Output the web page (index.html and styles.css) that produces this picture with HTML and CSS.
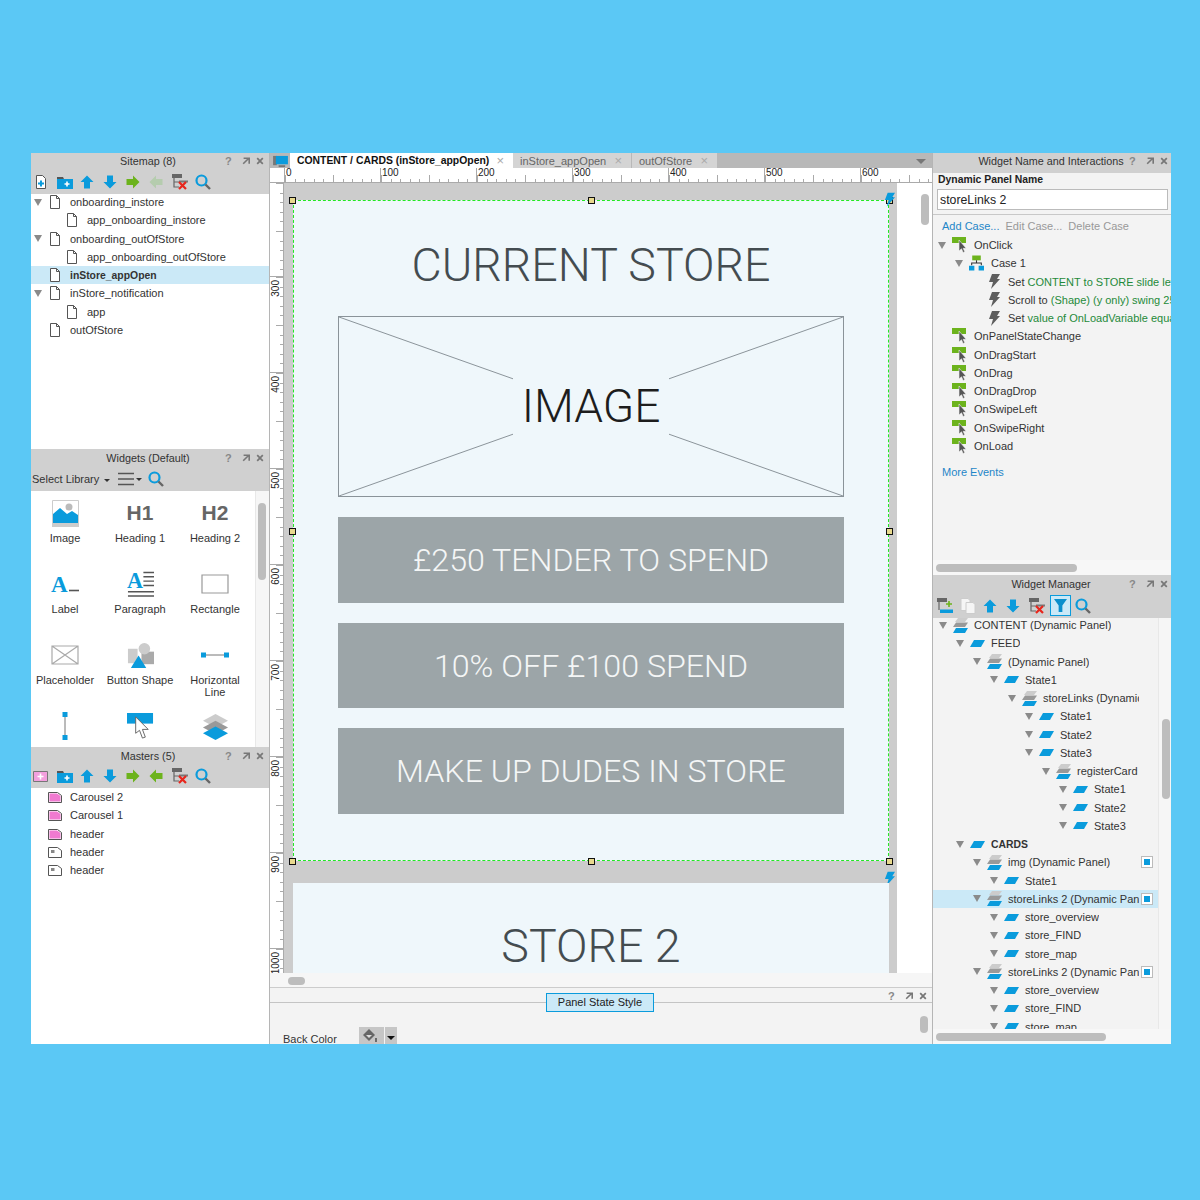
FILE: index.html
```html
<!DOCTYPE html>
<html lang="en">
<head>
  <meta charset="UTF-8" />
  <title>CONTENT / CARDS (inStore_appOpen)</title>
  <link rel="stylesheet" href="styles.css">
</head>
<body>
  <!-- icon sprite -->
  <svg class="sprite" xmlns="http://www.w3.org/2000/svg">
    <symbol id="i-page" viewBox="0 0 12 14"><path d="M1.5.5h6l3 3v10h-9z" fill="#fff" stroke="#555"/><path d="M7.5.5v3h3" fill="none" stroke="#555"/></symbol>
    <symbol id="i-newpage" viewBox="0 0 12 14"><path d="M1.5.5h6l3 3v10h-9z" fill="#fff" stroke="#555"/><path d="M6 5.5v6M3 8.5h6" stroke="#0a9bdc" stroke-width="2"/></symbol>
    <symbol id="i-folder" viewBox="0 0 16 13"><path d="M0 1h6l1 2h-7z" fill="#555"/><path d="M0 3h16v10H0z" fill="#0a9bdc"/><path d="M10 5.5v5M7.5 8h5" stroke="#fff" stroke-width="1.6"/></symbol>
    <symbol id="i-arrow" viewBox="0 0 14 14"><path d="M7 .5l6.500 6.500H10v6.500H4V7H.5z" fill="currentColor"/></symbol>
    <symbol id="i-delete" viewBox="0 0 16 16"><path d="M0 0h10v4H0z" fill="#666"/><path d="M2 4v9h5M2 8h5" fill="none" stroke="#666" stroke-width="1.2"/><path d="M7 6.500h9v2H7z" fill="#777"/><path d="M7 8l7 7M14 8l-7 7" stroke="#e8261c" stroke-width="2.200"/></symbol>
    <symbol id="i-search" viewBox="0 0 16 16"><circle cx="6.500" cy="6.500" r="5" fill="none" stroke="#0a9bdc" stroke-width="2.200"/><path d="M10.500 10.500l4.500 4.500" stroke="#666" stroke-width="2.400"/></symbol>
    <symbol id="i-pin" viewBox="0 0 10 10"><path d="M2 1.500h7v7M8.500 1.500L1.500 8.500" fill="none" stroke="#777" stroke-width="2"/></symbol>
    <symbol id="i-close" viewBox="0 0 10 10"><path d="M1.500 1.500l7 7M8.500 1.500l-7 7" stroke="#777" stroke-width="2.200"/></symbol>
    <symbol id="i-menu" viewBox="0 0 24 14"><path d="M0 1.500h16M0 7h16M0 12.500h16" stroke="#555" stroke-width="1.600"/><path d="M18 6h6l-3 3z" fill="#333"/></symbol>
    <symbol id="i-image" viewBox="0 0 27 27"><path d="M.5.500h26v26H.5z" fill="#fff" stroke="#ccc"/><path d="M1 23v-9l7-6 7 6 5-3 6 4v8z" fill="#0a9bdc"/><circle cx="17" cy="7" r="3.500" fill="#bbb"/><path d="M0 23h27v4H0z" fill="#ccc"/></symbol>
    <symbol id="i-label" viewBox="0 0 28 22"><text x="0" y="19" class="svg-serif" font-size="23" fill="#0a9bdc">A</text><path d="M18 17.500h10" stroke="#555" stroke-width="1.600"/></symbol>
    <symbol id="i-para" viewBox="0 0 28 28"><text x="0" y="18" class="svg-serif" font-size="23" fill="#0a9bdc">A</text><path d="M17 1.500h11M17 6h11M17 10.500h11M17 15h11M1 21.500h27M1 26h27" stroke="#555" stroke-width="1.500"/></symbol>
    <symbol id="i-rect" viewBox="0 0 28 20"><path d="M1 1h26v18H1z" fill="#fff" stroke="#999" stroke-width="1.200"/></symbol>
    <symbol id="i-placeholder" viewBox="0 0 28 20"><path d="M1 1h26v18H1zM1 1l26 18M27 1L1 19" fill="#fff" stroke="#aaa" stroke-width="1.200"/></symbol>
    <symbol id="i-shape" viewBox="0 0 28 28"><path d="M1 7h10v15H1z" fill="#ccc"/><path d="M15 10h13v13H15z" fill="#aaa"/><circle cx="18" cy="7" r="6" fill="#ccc"/><path d="M4 27L12 14l8 13z" fill="#0a9bdc"/></symbol>
    <symbol id="i-hline" viewBox="0 0 28 10"><path d="M3 5h22" stroke="#777"/><path d="M0 2.500h5v5H0zM23 2.500h5v5h-5z" fill="#0a9bdc"/></symbol>
    <symbol id="i-vline" viewBox="0 0 10 28"><path d="M5 3v22" stroke="#777"/><path d="M2.500 0h5v5h-5zM2.500 23h5v5h-5z" fill="#0a9bdc"/></symbol>
    <symbol id="i-hotspot" viewBox="0 0 28 28"><path d="M0 0h27v11H0z" fill="#0a9bdc"/><path d="M9 4v17l4-3 3 8 3-1-3-8 6 0z" fill="#fff" stroke="#666"/></symbol>
    <symbol id="i-stack" viewBox="0 0 28 28"><path d="M14 1l13 7-13 7-13-7z" fill="#ccc"/><path d="M14 8l13 7-13 7-13-7z" fill="#999"/><path d="M14 14l13 7-13 7-13-7z" fill="#0a9bdc"/></symbol>
    <symbol id="i-master" viewBox="0 0 15 12"><path d="M.5 1.500h9l4 3v7H.5z" fill="#fff" stroke="#555"/><path d="M1.500 2.500h7.500l3.500 2.500v5.500h-11z" fill="#f07ad0"/></symbol>
    <symbol id="i-masterg" viewBox="0 0 15 12"><path d="M.5 1.500h9l4 3v7H.5z" fill="#fff" stroke="#555"/><path d="M3 4h3.500v3H3z" fill="#888"/></symbol>
    <symbol id="i-newmaster" viewBox="0 0 15 12"><path d="M.5 1.500h14v10H.5z" fill="#f3a0de" stroke="#777"/><path d="M7.500 3.500v6M4.500 6.500h6" stroke="#fff" stroke-width="1.600"/></symbol>
    <symbol id="i-event" viewBox="0 0 15 16"><path d="M0 0h14v6H0z" fill="#6cb31c"/><path d="M7 3v11l2.500-2.200 1.600 3.700 1.700-.8-1.600-3.400h3z" fill="#555" stroke="#f3f3f3" stroke-width=".6"/></symbol>
    <symbol id="i-case" viewBox="0 0 14 14"><path d="M3 0h8v4.500H3z" fill="#6cb31c"/><path d="M7 4.500v3M2.500 9V7h9v2" fill="none" stroke="#333"/><path d="M0 9.500h5V14H0zM9 9.500h5V14H9z" fill="#0a9bdc"/></symbol>
    <symbol id="i-bolt" viewBox="0 0 12 15"><path d="M4 0h8L9 5h3L3 15l2-7H1z" fill="currentColor"/></symbol>
    <symbol id="i-layers" viewBox="0 0 15 15"><path d="M5 0h10l-3 4H2z" fill="#ccc"/><path d="M3 4.500h12l-3 4.500H0z" fill="#999"/><path d="M3 10h12l-3 5H0z" fill="#0a9bdc"/></symbol>
    <symbol id="i-state" viewBox="0 0 15 7"><path d="M4 0h11l-4 7H0z" fill="#0a9bdc"/></symbol>
    <symbol id="i-addstate" viewBox="0 0 16 16"><path d="M0 0h10v4H0z" fill="#666"/><path d="M2 4v8" stroke="#666" stroke-width="1.200"/><path d="M3 11.500h13V15H3z" fill="#0a9bdc"/><path d="M12 3v6M9 6h6" stroke="#6cb31c" stroke-width="1.600"/></symbol>
    <symbol id="i-copy" viewBox="0 0 16 16"><path d="M1 .5h7l2 2v10H1z" fill="#f5f5f5" stroke="#ccc"/><path d="M6 4.500h7l2 2v9H6z" fill="#f5f5f5" stroke="#ccc"/></symbol>
    <symbol id="i-filter" viewBox="0 0 14 14"><path d="M0 0h14L9 7v7H5V7z" fill="#0a8fcc"/></symbol>
    <symbol id="i-device" viewBox="0 0 16 14"><path d="M0 1h4v10H0z" fill="#777"/><path d="M3 1h13v9H3z" fill="#0a9bdc"/><path d="M6 11h7v2H6z" fill="#777"/></symbol>
    <symbol id="i-bucket" viewBox="0 0 16 14"><path d="M6 0l6 6-6 6-6-6z" fill="#666"/><path d="M3 6h6l-3 3z" fill="#ddd"/><path d="M13 9v4" stroke="#444" stroke-width="1.400"/></symbol>
  </svg>

  <div class="app">
    <!-- left column -->
    <div class="col-left">
      <section class="panel">
        <header class="panel-head head-top"><span></span><span class="panel-title">Sitemap (8)</span><span class="panel-acts"><b>?</b><svg><use href="#i-pin"/></svg><svg><use href="#i-close"/></svg></span></header>
        <div class="tools">
          <svg class="t-page"><use href="#i-newpage"/></svg>
          <svg class="t-folder"><use href="#i-folder"/></svg>
          <svg class="t-arrow up"><use href="#i-arrow"/></svg>
          <svg class="t-arrow down"><use href="#i-arrow"/></svg>
          <svg class="t-arrow right"><use href="#i-arrow"/></svg>
          <svg class="t-arrow left off"><use href="#i-arrow"/></svg>
          <svg class="t-del"><use href="#i-delete"/></svg>
          <svg class="t-search"><use href="#i-search"/></svg>
        </div>
        <div class="tree tree-up">
          <div class="row"><i class="tri"></i><svg class="ic-page"><use href="#i-page"/></svg><span>onboarding_instore</span></div>
          <div class="row s1"><i class="tri none"></i><svg class="ic-page"><use href="#i-page"/></svg><span>app_onboarding_instore</span></div>
          <div class="row"><i class="tri"></i><svg class="ic-page"><use href="#i-page"/></svg><span>onboarding_outOfStore</span></div>
          <div class="row s1"><i class="tri none"></i><svg class="ic-page"><use href="#i-page"/></svg><span>app_onboarding_outOfStore</span></div>
          <div class="row selected"><i class="tri none"></i><svg class="ic-page"><use href="#i-page"/></svg><span class="strong">inStore_appOpen</span></div>
          <div class="row"><i class="tri"></i><svg class="ic-page"><use href="#i-page"/></svg><span>inStore_notification</span></div>
          <div class="row s1"><i class="tri none"></i><svg class="ic-page"><use href="#i-page"/></svg><span>app</span></div>
          <div class="row"><i class="tri none"></i><svg class="ic-page"><use href="#i-page"/></svg><span>outOfStore</span></div>
        </div>
      </section>

      <section class="panel">
        <header class="panel-head"><span></span><span class="panel-title">Widgets (Default)</span><span class="panel-acts"><b>?</b><svg><use href="#i-pin"/></svg><svg><use href="#i-close"/></svg></span></header>
        <div class="tools tools-lib">
          <span class="lib">Select Library</span><i class="caret"></i>
          <svg class="t-menu"><use href="#i-menu"/></svg>
          <svg class="t-search"><use href="#i-search"/></svg>
        </div>
        <div class="widgets">
          <div class="widget-grid">
            <div class="widget"><div class="w-icon"><svg class="w-27"><use href="#i-image"/></svg></div><span>Image</span></div>
            <div class="widget"><div class="w-icon heading">H1</div><span>Heading 1</span></div>
            <div class="widget"><div class="w-icon heading">H2</div><span>Heading 2</span></div>
            <div class="widget"><div class="w-icon"><svg class="w-label"><use href="#i-label"/></svg></div><span>Label</span></div>
            <div class="widget"><div class="w-icon"><svg class="w-27"><use href="#i-para"/></svg></div><span>Paragraph</span></div>
            <div class="widget"><div class="w-icon"><svg class="w-rect"><use href="#i-rect"/></svg></div><span>Rectangle</span></div>
            <div class="widget"><div class="w-icon"><svg class="w-rect"><use href="#i-placeholder"/></svg></div><span>Placeholder</span></div>
            <div class="widget"><div class="w-icon"><svg class="w-27"><use href="#i-shape"/></svg></div><span>Button Shape</span></div>
            <div class="widget"><div class="w-icon"><svg class="w-hline"><use href="#i-hline"/></svg></div><span>Horizontal<br>Line</span></div>
            <div class="widget"><div class="w-icon"><svg class="w-vline"><use href="#i-vline"/></svg></div></div>
            <div class="widget"><div class="w-icon"><svg class="w-27"><use href="#i-hotspot"/></svg></div></div>
            <div class="widget"><div class="w-icon"><svg class="w-27"><use href="#i-stack"/></svg></div></div>
          </div>
          <div class="vtrack"><div class="thumb thumb-widgets"></div></div>
        </div>
      </section>

      <section class="panel">
        <header class="panel-head"><span></span><span class="panel-title">Masters (5)</span><span class="panel-acts"><b>?</b><svg><use href="#i-pin"/></svg><svg><use href="#i-close"/></svg></span></header>
        <div class="tools">
          <svg class="t-page wide"><use href="#i-newmaster"/></svg>
          <svg class="t-folder"><use href="#i-folder"/></svg>
          <svg class="t-arrow up"><use href="#i-arrow"/></svg>
          <svg class="t-arrow down"><use href="#i-arrow"/></svg>
          <svg class="t-arrow right"><use href="#i-arrow"/></svg>
          <svg class="t-arrow left"><use href="#i-arrow"/></svg>
          <svg class="t-del"><use href="#i-delete"/></svg>
          <svg class="t-search"><use href="#i-search"/></svg>
        </div>
        <div class="tree">
          <div class="row"><i class="tri none"></i><svg class="ic-master"><use href="#i-master"/></svg><span>Carousel 2</span></div>
          <div class="row"><i class="tri none"></i><svg class="ic-master"><use href="#i-master"/></svg><span>Carousel 1</span></div>
          <div class="row"><i class="tri none"></i><svg class="ic-master"><use href="#i-master"/></svg><span>header</span></div>
          <div class="row"><i class="tri none"></i><svg class="ic-master"><use href="#i-masterg"/></svg><span>header</span></div>
          <div class="row"><i class="tri none"></i><svg class="ic-master"><use href="#i-masterg"/></svg><span>header</span></div>
        </div>
      </section>
    </div>

    <!-- center column -->
    <div class="col-center">
      <div class="tabs">
        <svg class="tab-device"><use href="#i-device"/></svg>
        <div class="tab active">CONTENT / CARDS (inStore_appOpen)<em>×</em></div>
        <div class="tab tab-b">inStore_appOpen<em>×</em></div>
        <div class="tab tab-c">outOfStore<em>×</em></div>
        <i class="tabs-menu"></i>
      </div>
      <div class="ruler-h">
        <div class="rh-cell">0</div><div class="rh-cell">100</div><div class="rh-cell">200</div><div class="rh-cell">300</div><div class="rh-cell">400</div><div class="rh-cell">500</div><div class="rh-cell">600</div>
      </div>
      <div class="stage">
        <div class="ruler-v">
          <div class="rv-cell first"></div>
          <div class="rv-cell"><span>300</span></div><div class="rv-cell"><span>400</span></div><div class="rv-cell"><span>500</span></div><div class="rv-cell"><span>600</span></div><div class="rv-cell"><span>700</span></div><div class="rv-cell"><span>800</span></div><div class="rv-cell"><span>900</span></div><div class="rv-cell"><span>1000</span></div>
        </div>
        <div class="surface">
          <div class="card picked">
            <h1 class="card-title">CURRENT STORE</h1>
            <div class="placeholder">
              <svg class="ph-lines" viewBox="0 0 506 181" preserveAspectRatio="none"><path d="M0 0L506 181M506 0L0 181"/></svg>
              <span class="ph-text">IMAGE</span>
            </div>
            <div class="cta">£250 TENDER TO SPEND</div>
            <div class="cta">10% OFF £100 SPEND</div>
            <div class="cta">MAKE UP DUDES IN STORE</div>
            <i class="handle h-tl"></i><i class="handle h-tc"></i><i class="handle h-tr"></i>
            <i class="handle h-ml"></i><i class="handle h-mr"></i>
            <i class="handle h-bl"></i><i class="handle h-bc"></i><i class="handle h-br"></i>
            <svg class="bolt bolt-top"><use href="#i-bolt"/></svg>
            <svg class="bolt bolt-bottom"><use href="#i-bolt"/></svg>
          </div>
          <div class="card second">
            <h1 class="card-title">STORE 2</h1>
          </div>
        </div>
        <div class="blank"></div>
        <div class="vtrack stage-track"><div class="thumb thumb-stage"></div></div>
      </div>
      <div class="hscroll"><div class="hthumb"></div></div>
      <div class="style-panel">
        <div class="style-head">
          <span class="style-btn">Panel State Style</span>
          <span class="panel-acts"><b>?</b><svg><use href="#i-pin"/></svg><svg><use href="#i-close"/></svg></span>
        </div>
        <div class="style-body">
          <span>Back Color</span>
          <span class="swatch"><svg><use href="#i-bucket"/></svg></span><span class="swatch-drop"></span>
          <div class="thumb thumb-style"></div>
        </div>
      </div>
    </div>

    <!-- right column -->
    <div class="col-right">
      <section class="panel panel-grey">
        <header class="panel-head head-top"><span></span><span class="panel-title">Widget Name and Interactions</span><span class="panel-acts"><b>?</b><svg><use href="#i-pin"/></svg><svg><use href="#i-close"/></svg></span></header>
        <div class="name-box">
          <label class="name-label" for="panelName">Dynamic Panel Name</label>
          <input class="name-input" id="panelName" type="text" value="storeLinks 2">
        </div>
        <div class="case-links"><a>Add Case...</a><span>Edit Case...</span><span>Delete Case</span></div>
        <div class="events">
          <div class="row"><i class="tri"></i><svg class="ic-event"><use href="#i-event"/></svg><span>OnClick</span></div>
          <div class="row w1"><i class="tri"></i><svg class="ic-event"><use href="#i-case"/></svg><span>Case 1</span></div>
          <div class="row w2"><i class="tri none"></i><svg class="ic-bolt"><use href="#i-bolt"/></svg><span>Set <em>CONTENT to STORE slide left</em></span></div>
          <div class="row w2"><i class="tri none"></i><svg class="ic-bolt"><use href="#i-bolt"/></svg><span>Scroll to <em>(Shape) (y only) swing 250ms</em></span></div>
          <div class="row w2"><i class="tri none"></i><svg class="ic-bolt"><use href="#i-bolt"/></svg><span>Set <em>value of OnLoadVariable equal to</em></span></div>
          <div class="row"><i class="tri none"></i><svg class="ic-event"><use href="#i-event"/></svg><span>OnPanelStateChange</span></div>
          <div class="row"><i class="tri none"></i><svg class="ic-event"><use href="#i-event"/></svg><span>OnDragStart</span></div>
          <div class="row"><i class="tri none"></i><svg class="ic-event"><use href="#i-event"/></svg><span>OnDrag</span></div>
          <div class="row"><i class="tri none"></i><svg class="ic-event"><use href="#i-event"/></svg><span>OnDragDrop</span></div>
          <div class="row"><i class="tri none"></i><svg class="ic-event"><use href="#i-event"/></svg><span>OnSwipeLeft</span></div>
          <div class="row"><i class="tri none"></i><svg class="ic-event"><use href="#i-event"/></svg><span>OnSwipeRight</span></div>
          <div class="row"><i class="tri none"></i><svg class="ic-event"><use href="#i-event"/></svg><span>OnLoad</span></div>
        </div>
        <a class="more-events">More Events</a>
        <div class="hbar hbar-top"><div class="hbar-thumb"></div></div>
      </section>

      <section class="panel panel-grey">
        <header class="panel-head"><span></span><span class="panel-title">Widget Manager</span><span class="panel-acts"><b>?</b><svg><use href="#i-pin"/></svg><svg><use href="#i-close"/></svg></span></header>
        <div class="tools tools-wm">
          <svg class="t-del"><use href="#i-addstate"/></svg>
          <svg class="t-del"><use href="#i-copy"/></svg>
          <svg class="t-arrow up"><use href="#i-arrow"/></svg>
          <svg class="t-arrow down"><use href="#i-arrow"/></svg>
          <svg class="t-del tight"><use href="#i-delete"/></svg>
          <span class="filter-on"><svg><use href="#i-filter"/></svg></span>
          <svg class="t-search"><use href="#i-search"/></svg>
        </div>
        <div class="wm-body">
          <div class="wm-tree">
            <div class="row d0"><i class="tri"></i><svg class="ic-layers"><use href="#i-layers"/></svg><span>CONTENT (Dynamic Panel)</span></div>
            <div class="row d1"><i class="tri"></i><svg class="ic-state"><use href="#i-state"/></svg><span>FEED</span></div>
            <div class="row d2"><i class="tri"></i><svg class="ic-layers"><use href="#i-layers"/></svg><span>(Dynamic Panel)</span></div>
            <div class="row d3"><i class="tri"></i><svg class="ic-state"><use href="#i-state"/></svg><span>State1</span></div>
            <div class="row d4"><i class="tri"></i><svg class="ic-layers"><use href="#i-layers"/></svg><span>storeLinks (Dynamic Panel)</span></div>
            <div class="row d5"><i class="tri"></i><svg class="ic-state"><use href="#i-state"/></svg><span>State1</span></div>
            <div class="row d5"><i class="tri"></i><svg class="ic-state"><use href="#i-state"/></svg><span>State2</span></div>
            <div class="row d5"><i class="tri"></i><svg class="ic-state"><use href="#i-state"/></svg><span>State3</span></div>
            <div class="row d6"><i class="tri"></i><svg class="ic-layers"><use href="#i-layers"/></svg><span>registerCard</span></div>
            <div class="row d7"><i class="tri"></i><svg class="ic-state"><use href="#i-state"/></svg><span>State1</span></div>
            <div class="row d7"><i class="tri"></i><svg class="ic-state"><use href="#i-state"/></svg><span>State2</span></div>
            <div class="row d7"><i class="tri"></i><svg class="ic-state"><use href="#i-state"/></svg><span>State3</span></div>
            <div class="row d1"><i class="tri"></i><svg class="ic-state"><use href="#i-state"/></svg><span class="strong">CARDS</span></div>
            <div class="row d2"><i class="tri"></i><svg class="ic-layers"><use href="#i-layers"/></svg><span>img (Dynamic Panel)</span><i class="vis"></i></div>
            <div class="row d3"><i class="tri"></i><svg class="ic-state"><use href="#i-state"/></svg><span>State1</span></div>
            <div class="row d2 selected"><i class="tri"></i><svg class="ic-layers"><use href="#i-layers"/></svg><span>storeLinks 2 (Dynamic Panel)</span><i class="vis"></i></div>
            <div class="row d3"><i class="tri"></i><svg class="ic-state"><use href="#i-state"/></svg><span>store_overview</span></div>
            <div class="row d3"><i class="tri"></i><svg class="ic-state"><use href="#i-state"/></svg><span>store_FIND</span></div>
            <div class="row d3"><i class="tri"></i><svg class="ic-state"><use href="#i-state"/></svg><span>store_map</span></div>
            <div class="row d2"><i class="tri"></i><svg class="ic-layers"><use href="#i-layers"/></svg><span>storeLinks 2 (Dynamic Panel)</span><i class="vis"></i></div>
            <div class="row d3"><i class="tri"></i><svg class="ic-state"><use href="#i-state"/></svg><span>store_overview</span></div>
            <div class="row d3"><i class="tri"></i><svg class="ic-state"><use href="#i-state"/></svg><span>store_FIND</span></div>
            <div class="row d3"><i class="tri"></i><svg class="ic-state"><use href="#i-state"/></svg><span>store_map</span></div>
          </div>
          <div class="vtrack wm-track"><div class="thumb thumb-wm"></div></div>
        </div>
        <div class="hbar hbar-bottom"><div class="hbar-thumb wm-hthumb"></div></div>
      </section>
    </div>
  </div>
</body>
</html>
```

FILE: styles.css
```css
:root {
  --blue: #0a9bdc;
  --head: #d0d0d0;
  --line: #b5b5b5;
  --grey-bg: #f3f3f3;
  --select: #cbe9f7;
  --thumb: #bdbdbd;
  --text: #333;
}

* {
  box-sizing: border-box;
}

body {
  margin: 0;
  height: 1200px;
  padding: 153px 0 0 31px;
  overflow: hidden;
  background-color: #5bc8f5;
  font-family: "Liberation Sans", Arial, sans-serif;
  font-size: 11px;
  color: var(--text);
}

.sprite {
  display: none;
}

.svg-serif {
  font-family: "Liberation Serif", serif;
  font-weight: bold;
}

.app {
  display: grid;
  grid-template-columns: 238px 663px 239px;
  width: 1140px;
  height: 891px;
  overflow: hidden;
  background-color: #fff;
}

/* panels */
.col-left {
  display: grid;
  grid-template-rows: 296px 298px 297px;
  min-width: 0;
}

.col-right {
  display: grid;
  grid-template-rows: 422px 469px;
  min-width: 0;
  border-left: 1px solid var(--line);
}

.panel {
  display: flex;
  flex-direction: column;
  min-height: 0;
  min-width: 0;
  overflow: hidden;
  background-color: #fff;
}

.panel-grey {
  background-color: var(--grey-bg);
}

.panel-head {
  display: grid;
  flex: none;
  grid-template-columns: 1fr auto 1fr;
  align-items: center;
  height: 20px;
  padding-bottom: 3px;
  background-color: var(--head);
}

.panel-head.head-top {
  padding-bottom: 5px;
}

.col-left .panel-head {
  padding-right: 4px;
}

.col-right .panel-head {
  padding-right: 2px;
}

.panel-title {
  white-space: nowrap;
  font-size: 10.8px;
  color: #333;
}

.panel-acts {
  display: flex;
  justify-self: end;
  align-items: center;
  padding-right: 1px;
}

.style-head .panel-acts {
  padding-right: 5px;
}

.panel-acts b {
  width: 8px;
  margin-right: 3px;
  font-size: 11px;
  color: #888;
}

.panel-acts svg {
  width: 8px;
  height: 8px;
  margin-left: 6px;
}

.tools {
  display: flex;
  flex: none;
  align-items: center;
  height: 21px;
  padding: 0 0 3px 4px;
  background-color: var(--head);
}

.tools svg {
  display: block;
  flex: none;
}

.t-page {
  width: 12px;
  height: 14px;
  margin-right: 10px;
}

.t-page.wide {
  width: 15px;
  height: 12px;
  margin-right: 9px;
  margin-left: -2px;
}

.t-folder {
  width: 16px;
  height: 13px;
  margin-right: 7px;
}

.t-arrow {
  width: 14px;
  height: 14px;
  margin-right: 9px;
  color: var(--blue);
}

.t-arrow.down {
  transform: rotate(180deg);
}

.t-arrow.right {
  transform: rotate(90deg);
  color: #6cb31c;
}

.t-arrow.left {
  transform: rotate(-90deg);
  color: #6cb31c;
}

.t-arrow.left.off {
  color: #b5ccae;
}

.t-del {
  width: 16px;
  height: 16px;
  margin-right: 7px;
}

.t-del.tight {
  margin-right: 5px;
}

.t-search {
  width: 16px;
  height: 16px;
}

.tools-lib {
  height: 22px;
  padding: 0 0 2px 1px;
}

.lib {
  margin-right: 5px;
}

.caret {
  width: 0;
  height: 0;
  margin: 2px 8px 0 0;
  border-top: 3px solid #333;
  border-right: 3px solid transparent;
  border-left: 3px solid transparent;
}

.t-menu {
  width: 24px;
  height: 14px;
  margin-right: 6px;
}

.tools-wm {
  height: 23px;
  padding: 0 0 2px 4px;
}

.filter-on {
  display: flex;
  align-items: center;
  justify-content: center;
  width: 21px;
  height: 21px;
  margin-right: 4px;
  border: 1px solid var(--blue);
  background-color: #cbe9f7;
}

.filter-on svg {
  width: 13px;
  height: 13px;
}

/* tree rows */
.tree {
  flex: 1;
}

.tree-up {
  margin-top: -1px;
}

.row {
  position: relative;
  display: flex;
  align-items: center;
  height: 18.25px;
  padding-left: 3px;
  white-space: nowrap;
  overflow: hidden;
}

.row.selected {
  background-color: var(--select);
}

.row.s1 {
  padding-left: 20px;
}

.strong {
  font-size: 10.4px;
  font-weight: bold;
}

.tri {
  flex: none;
  width: 0;
  height: 0;
  margin-right: 2px;
  border-top: 7px solid #8a8a8a;
  border-right: 4.5px solid transparent;
  border-left: 4.5px solid transparent;
}

.tri.none {
  border-top-color: transparent;
}

.ic-page {
  flex: none;
  width: 12px;
  height: 14px;
  margin: 0 9px 0 5px;
}

.ic-master {
  flex: none;
  width: 15px;
  height: 12px;
  margin: 0 7px 0 4px;
}

/* widgets */
.widgets {
  display: flex;
  flex: 1;
  min-height: 0;
}

.widget-grid {
  display: grid;
  flex: none;
  grid-template-columns: repeat(3, 68px);
  grid-auto-rows: 71px;
  column-gap: 7px;
  width: 224px;
  padding-top: 7px;
  overflow: hidden;
}

.widget {
  display: flex;
  flex-direction: column;
  align-items: center;
  text-align: center;
  line-height: 12px;
  white-space: nowrap;
}

.w-icon {
  display: flex;
  align-items: center;
  justify-content: center;
  height: 30px;
  margin-bottom: 4px;
}

.heading {
  font-size: 21px;
  font-weight: bold;
  color: #666;
}

.w-27 {
  width: 27px;
  height: 27px;
}

.w-label {
  width: 28px;
  height: 22px;
}

.w-rect {
  width: 28px;
  height: 20px;
}

.w-hline {
  width: 28px;
  height: 10px;
}

.w-vline {
  width: 10px;
  height: 28px;
}

.vtrack {
  position: relative;
  flex: none;
  width: 14px;
  background-color: #f6f6f6;
  border-left: 1px solid #e8e8e8;
}

.thumb {
  position: absolute;
  width: 8px;
  border-radius: 4px;
  background-color: var(--thumb);
}

.thumb-widgets {
  top: 12px;
  left: 2px;
  height: 77px;
}

/* center */
.col-center {
  display: grid;
  grid-template-rows: 15px 15px 790px 15px 56px;
  min-width: 0;
  border-left: 1px solid var(--line);
}

.tabs {
  display: flex;
  align-items: stretch;
  position: relative;
  background-color: #b8b8b8;
}

.tab-device {
  flex: none;
  width: 15px;
  height: 13px;
  margin: 2px 2px 0 3px;
}

.tab {
  display: flex;
  align-items: center;
  justify-content: space-between;
  padding: 0 9px 0 7px;
  background-color: #d4d4d4;
  color: #666;
  white-space: nowrap;
}

.tab em {
  font-style: normal;
  font-size: 13px;
  font-weight: normal;
  color: #aaa;
}

.tab.active {
  width: 223px;
  background-color: #fff;
  color: #111;
  font-size: 10.4px;
  font-weight: bold;
}

.tab-b {
  width: 119px;
  border-right: 1px solid #b8b8b8;
}

.tab-c {
  width: 85px;
}

.tabs-menu {
  position: absolute;
  top: 6px;
  right: 6px;
  width: 0;
  height: 0;
  border-top: 5px solid #777;
  border-right: 5px solid transparent;
  border-left: 5px solid transparent;
}

.ruler-h {
  display: flex;
  padding-left: 14px;
  overflow: hidden;
  background-color: #fff;
  border-bottom: 1px solid #aaa;
}

.rh-cell {
  flex: none;
  width: 96px;
  padding-left: 1px;
  border-left: 1px solid #aaa;
  background-image: repeating-linear-gradient(90deg, #aaa 0 1px, transparent 1px 9.6px), repeating-linear-gradient(90deg, #aaa 0 1px, transparent 1px 48px);
  background-repeat: no-repeat;
  background-position: left bottom, left bottom;
  background-size: 100% 3px, 100% 7px;
  font-size: 10px;
  line-height: 10px;
  color: #222;
}

.stage {
  display: flex;
  min-height: 0;
  background-color: #fff;
}

.ruler-v {
  flex: none;
  width: 14px;
  overflow: hidden;
  background-color: #fff;
  border-right: 1px solid #aaa;
}

.rv-cell {
  height: 96px;
  border-top: 1px solid #aaa;
  background-image: repeating-linear-gradient(180deg, #aaa 0 1px, transparent 1px 9.6px), repeating-linear-gradient(180deg, #aaa 0 1px, transparent 1px 48px);
  background-repeat: no-repeat;
  background-position: right top, right top;
  background-size: 3px 100%, 7px 100%;
}

.rv-cell.first {
  height: 93px;
  border-top: 0;
}

.rv-cell span {
  display: block;
  margin: 3px 0 0 1px;
  writing-mode: vertical-rl;
  transform: rotate(180deg);
  font-size: 10px;
  line-height: 10px;
  color: #222;
}

.surface {
  flex: none;
  width: 613px;
  padding: 17px 8px 0 9px;
  overflow: hidden;
  background-color: #ccc;
}

.card {
  position: relative;
  width: 596px;
  padding: 0 45px;
  background-color: #eff7fb;
}

.card.picked {
  height: 661px;
  margin-bottom: 22px;
  outline: 1px dashed #22e822;
  outline-offset: -1px;
}

.card.second {
  height: 300px;
}

.card-title {
  margin: 0;
  padding: 40px 0 26px;
  font-family: Roboto, "Liberation Sans", sans-serif;
  font-size: 46.5px;
  font-weight: 300;
  line-height: 50px;
  text-align: center;
  color: #444c50;
}

.card.second .card-title {
  padding-top: 38px;
}

.placeholder {
  position: relative;
  display: flex;
  align-items: center;
  justify-content: center;
  height: 181px;
  margin-bottom: 20px;
  border: 1px solid #8a9399;
}

.ph-lines {
  position: absolute;
  inset: 0;
  width: 100%;
  height: 100%;
}

.ph-lines path {
  fill: none;
  stroke: #8a9399;
  stroke-width: 1;
}

.ph-text {
  position: relative;
  height: 57px;
  padding: 0 9px;
  background-color: #eff7fb;
  font-family: Roboto, "Liberation Sans", sans-serif;
  font-size: 46px;
  font-weight: 300;
  line-height: 57px;
  color: #1d1d1d;
}

.cta {
  display: flex;
  align-items: center;
  justify-content: center;
  height: 85.5px;
  margin-bottom: 20px;
  padding-top: 1px;
  background-color: #9ca5a8;
  font-family: Roboto, "Liberation Sans", sans-serif;
  font-size: 32.2px;
  font-weight: 300;
  color: #f4f6f6;
}

.handle {
  position: absolute;
  width: 7px;
  height: 7px;
  border: 1px solid #111;
  background-color: #e8da8e;
}

.h-tl, .h-ml, .h-bl { left: -4px; }
.h-tc, .h-bc { left: 295px; }
.h-tr, .h-mr, .h-br { right: -4px; }
.h-tl, .h-tc, .h-tr { top: -3px; }
.h-ml, .h-mr { top: 328px; }
.h-bl, .h-bc, .h-br { bottom: -4px; }

.bolt {
  position: absolute;
  width: 11px;
  height: 15px;
  color: var(--blue);
}

.bolt-top {
  top: -8px;
  right: -6px;
}

.bolt-bottom {
  top: 671px;
  right: -6px;
}

.blank {
  flex: none;
  width: 20px;
  background-color: #fff;
}

.stage-track {
  width: 15px;
  border-left: 0;
  background-color: #fff;
}

.thumb-stage {
  top: 11px;
  left: 4px;
  height: 31px;
}

.hscroll {
  position: relative;
  background-color: #f6f6f6;
  border-bottom: 1px solid #ccc;
}

.hthumb {
  position: absolute;
  top: 4px;
  left: 18px;
  width: 17px;
  height: 8px;
  border-radius: 4px;
  background-color: var(--thumb);
}

.style-panel {
  background-color: var(--grey-bg);
  overflow: hidden;
}

.style-head {
  position: relative;
  display: flex;
  justify-content: flex-end;
  height: 15px;
  padding-top: 1px;
  border-bottom: 1px solid #c4c4c4;
}

.style-btn {
  position: absolute;
  top: 5px;
  left: 276px;
  width: 108px;
  height: 19px;
  border: 1px solid var(--blue);
  background-color: #cbe9f7;
  line-height: 17px;
  text-align: center;
  color: #222;
}

.style-body {
  position: relative;
  display: flex;
  align-items: flex-start;
  height: 41px;
  padding: 24px 0 0 13px;
}

.style-body > span:first-child {
  width: 76px;
  margin-top: 6px;
}

.swatch {
  width: 25px;
  height: 17px;
  margin-right: 1px;
  padding: 2px 0 0 4px;
  background-color: #c6c6c6;
}

.swatch svg {
  display: block;
  width: 16px;
  height: 14px;
}

.swatch-drop {
  position: relative;
  width: 12px;
  height: 17px;
  background-color: #c6c6c6;
}

.swatch-drop::after {
  content: "";
  position: absolute;
  top: 9px;
  left: 2px;
  border-top: 4px solid #111;
  border-right: 4px solid transparent;
  border-left: 4px solid transparent;
}

.thumb-style {
  top: 13px;
  right: 4px;
  height: 17px;
}

/* right column */
.name-box {
  display: flex;
  flex-direction: column;
  flex: none;
  height: 42px;
  padding: 0 3px 0 5px;
  border-bottom: 1px solid #c8c8c8;
}

.name-label {
  font-size: 10.4px;
  font-weight: bold;
  line-height: 14px;
  color: #222;
}

.name-input {
  height: 21px;
  margin: 2px 0 0 -1px;
  padding: 0 2px;
  border: 1px solid #bbb;
  background-color: #fff;
  font: 12.3px "Liberation Sans", Arial, sans-serif;
  color: #222;
}

.case-links {
  display: flex;
  flex: none;
  gap: 6px;
  height: 22px;
  padding-left: 9px;
  align-items: center;
  color: #999;
}

.case-links a {
  color: #1f86c8;
}

.events {
  flex: none;
  margin-top: -1px;
}

.events .row {
  padding-left: 5px;
}

.events .row.w1 {
  padding-left: 22px;
}

.events .row.w2 {
  padding-left: 40px;
}

.events em {
  font-style: normal;
  color: #1f8a3a;
}

.ic-event {
  flex: none;
  width: 15px;
  height: 16px;
  margin: 0 7px 0 4px;
}

.ic-bolt {
  flex: none;
  width: 12px;
  height: 15px;
  margin: 0 8px 0 5px;
  color: #5e5e5e;
}

.more-events {
  flex: none;
  margin: 11px 0 0 9px;
  color: #1f86c8;
}

.hbar {
  position: relative;
  flex: none;
  margin-top: auto;
  height: 15px;
  background-color: #f7f7f7;
}

.hbar-thumb {
  position: absolute;
  top: 4px;
  left: 3px;
  width: 141px;
  height: 8px;
  border-radius: 4px;
  background-color: var(--thumb);
}

.wm-hthumb {
  width: 170px;
}

.wm-body {
  display: flex;
  flex: 1;
  min-height: 0;
  overflow: hidden;
}

.wm-tree {
  flex: 1;
  min-width: 0;
  margin-top: -2px;
  overflow: hidden;
}

.wm-tree .row {
  padding-right: 19px;
}

.wm-tree .row > span {
  overflow: hidden;
}

.ic-layers {
  flex: none;
  width: 15px;
  height: 15px;
  margin: 0 6px 0 4px;
}

.ic-state {
  flex: none;
  width: 15px;
  height: 7px;
  margin: 0 6px 0 4px;
}

.wm-tree .d0 { padding-left: 6px; }
.wm-tree .d1 { padding-left: 23px; }
.wm-tree .d2 { padding-left: 40px; }
.wm-tree .d3 { padding-left: 57px; }
.wm-tree .d4 { padding-left: 75px; }
.wm-tree .d5 { padding-left: 92px; }
.wm-tree .d6 { padding-left: 109px; }
.wm-tree .d7 { padding-left: 126px; }

.vis {
  position: absolute;
  top: 3px;
  right: 5px;
  width: 12px;
  height: 12px;
  border: 1px solid #bbb;
  background-color: #fff;
}

.vis::after {
  content: "";
  position: absolute;
  inset: 2px;
  background-color: var(--blue);
}

.wm-track {
  width: 13px;
}

.thumb-wm {
  top: 101px;
  left: 3px;
  height: 80px;
}
```
